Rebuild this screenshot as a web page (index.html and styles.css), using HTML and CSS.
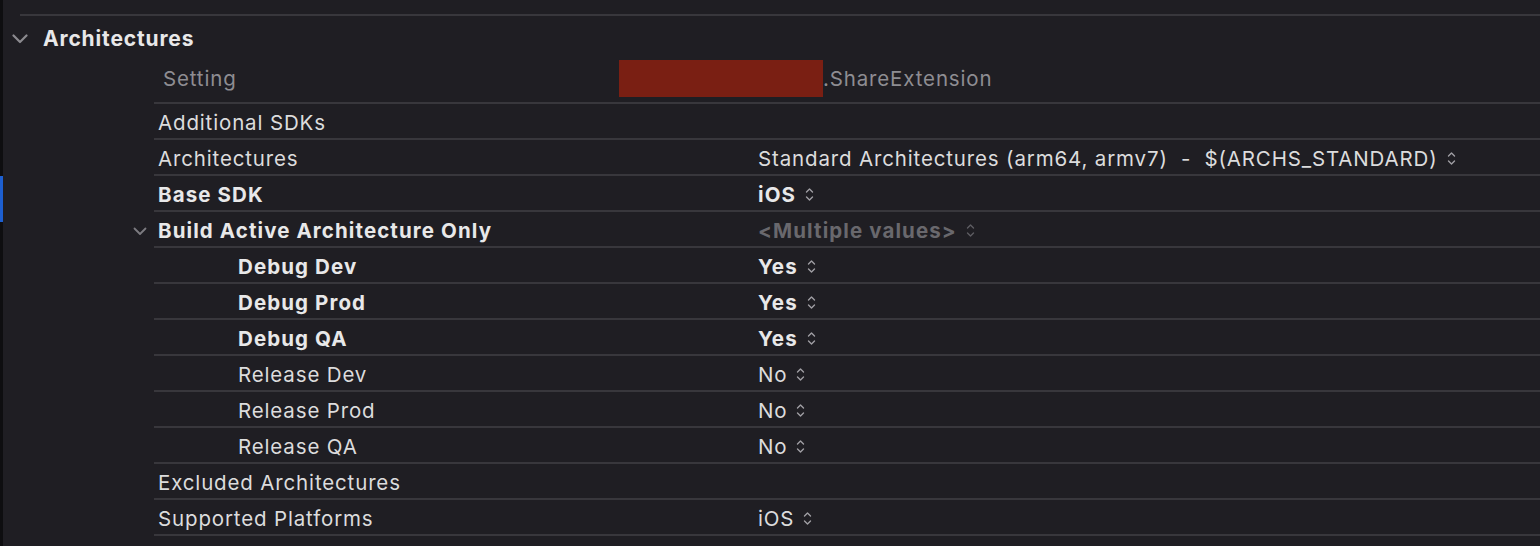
FILE: index.html
```html
<!DOCTYPE html>
<html>
<head>
<meta charset="utf-8">
<link rel="stylesheet" href="styles.css">
</head>
<body>
<div class="window">
  <div class="gutter"><div class="gutter-mark"></div></div>
  <div class="content">
    <div class="top-rule"></div>
    <div class="section-head">
      <svg class="sec-chev" width="16" height="10" viewBox="0 0 16 10"><path d="M1.5 1.5 L8 8 L14.5 1.5" fill="none" stroke="#8b8a8f" stroke-width="2.2" stroke-linecap="round" stroke-linejoin="round"/></svg>
      <span class="sec-title">Architectures</span>
    </div>
    <div class="table">
      <div class="col-head">
        <span class="col-setting">Setting</span>
        <span class="col-target"><span class="redact"></span>.ShareExtension</span>
      </div>

      <div class="row"><span class="label">Additional SDKs</span><span class="value"></span></div>
      <div class="row"><span class="label">Architectures</span><span class="value">Standard Architectures (arm64, armv7)&nbsp;&nbsp;-&nbsp;&nbsp;$(ARCHS_STANDARD)<svg class="updown" viewBox="0 0 9 15"><path d="M1.5 5 L4.5 2 L7.5 5 M1.5 10 L4.5 13 L7.5 10" fill="none" stroke="currentColor" stroke-width="1.4" stroke-linecap="round" stroke-linejoin="round"/></svg></span></div>
      <div class="row bold"><span class="label">Base SDK</span><span class="value">iOS<svg class="updown" viewBox="0 0 9 15"><path d="M1.5 5 L4.5 2 L7.5 5 M1.5 10 L4.5 13 L7.5 10" fill="none" stroke="currentColor" stroke-width="1.4" stroke-linecap="round" stroke-linejoin="round"/></svg></span></div>
      <div class="row bold"><span class="label"><svg class="row-chev" width="14" height="9" viewBox="0 0 14 9"><path d="M1.5 1.5 L7 7 L12.5 1.5" fill="none" stroke="#7c7b80" stroke-width="1.8" stroke-linecap="round" stroke-linejoin="round"/></svg>Build Active Architecture Only</span><span class="value muted">&lt;Multiple values&gt;<svg class="updown" viewBox="0 0 9 15"><path d="M1.5 5 L4.5 2 L7.5 5 M1.5 10 L4.5 13 L7.5 10" fill="none" stroke="currentColor" stroke-width="1.4" stroke-linecap="round" stroke-linejoin="round"/></svg></span></div>
      <div class="row bold sub"><span class="label">Debug Dev</span><span class="value">Yes<svg class="updown" viewBox="0 0 9 15"><path d="M1.5 5 L4.5 2 L7.5 5 M1.5 10 L4.5 13 L7.5 10" fill="none" stroke="currentColor" stroke-width="1.4" stroke-linecap="round" stroke-linejoin="round"/></svg></span></div>
      <div class="row bold sub"><span class="label">Debug Prod</span><span class="value">Yes<svg class="updown" viewBox="0 0 9 15"><path d="M1.5 5 L4.5 2 L7.5 5 M1.5 10 L4.5 13 L7.5 10" fill="none" stroke="currentColor" stroke-width="1.4" stroke-linecap="round" stroke-linejoin="round"/></svg></span></div>
      <div class="row bold sub"><span class="label">Debug QA</span><span class="value">Yes<svg class="updown" viewBox="0 0 9 15"><path d="M1.5 5 L4.5 2 L7.5 5 M1.5 10 L4.5 13 L7.5 10" fill="none" stroke="currentColor" stroke-width="1.4" stroke-linecap="round" stroke-linejoin="round"/></svg></span></div>
      <div class="row sub"><span class="label">Release Dev</span><span class="value">No<svg class="updown" viewBox="0 0 9 15"><path d="M1.5 5 L4.5 2 L7.5 5 M1.5 10 L4.5 13 L7.5 10" fill="none" stroke="currentColor" stroke-width="1.4" stroke-linecap="round" stroke-linejoin="round"/></svg></span></div>
      <div class="row sub"><span class="label">Release Prod</span><span class="value">No<svg class="updown" viewBox="0 0 9 15"><path d="M1.5 5 L4.5 2 L7.5 5 M1.5 10 L4.5 13 L7.5 10" fill="none" stroke="currentColor" stroke-width="1.4" stroke-linecap="round" stroke-linejoin="round"/></svg></span></div>
      <div class="row sub"><span class="label">Release QA</span><span class="value">No<svg class="updown" viewBox="0 0 9 15"><path d="M1.5 5 L4.5 2 L7.5 5 M1.5 10 L4.5 13 L7.5 10" fill="none" stroke="currentColor" stroke-width="1.4" stroke-linecap="round" stroke-linejoin="round"/></svg></span></div>
      <div class="row"><span class="label">Excluded Architectures</span><span class="value"></span></div>
      <div class="row"><span class="label">Supported Platforms</span><span class="value">iOS<svg class="updown" viewBox="0 0 9 15"><path d="M1.5 5 L4.5 2 L7.5 5 M1.5 10 L4.5 13 L7.5 10" fill="none" stroke="currentColor" stroke-width="1.4" stroke-linecap="round" stroke-linejoin="round"/></svg></span></div>
    </div>
  </div>
</div>
</body>
</html>
```

FILE: styles.css
```css
* { box-sizing: border-box; }
html, body {
  margin: 0;
  padding: 0;
  background: #1f1e23;
  height: 100%;
  overflow: hidden;
}
body {
  font-family: Inter, "Noto Sans", "Liberation Sans", sans-serif;
  color: #dcdcdd;
  font-size: 20.5px;
  letter-spacing: 0.85px;
}
.window {
  display: flex;
  height: 546px;
}
.gutter {
  width: 3px;
  flex: none;
  background: #0e0e10;
  padding-top: 176px;
}
.gutter-mark {
  height: 46px;
  background: #1d5fd0;
}
.content {
  flex: 1;
  padding-top: 14px;
}
.top-rule {
  margin-left: 17px;
  height: 2px;
  background: #38373c;
}
.section-head {
  height: 44px;
  display: flex;
  align-items: center;
  padding-left: 9px;
}
.sec-chev { flex: none; margin-top: 2px; }
.sec-title {
  margin-left: 15px;
  font-weight: 700;
  font-size: 21px;
  color: #e8e8e9;
}
.table {
  margin-left: 151px;
}
.col-head {
  height: 44px;
  display: flex;
  align-items: center;
  padding-bottom: 5px;
  border-bottom: 2px solid #38373c;
  color: #8e8d92;
}
.col-setting {
  width: 465px;
  padding-left: 9px;
}
.col-target {
  display: flex;
  align-items: center;
}
.redact {
  display: inline-block;
  width: 204px;
  height: 37px;
  background: #7a1f13;
}
.row {
  height: 36px;
  display: flex;
  align-items: center;
  padding-top: 2px;
  border-bottom: 2px solid #38373c;
}
.label {
  position: relative;
  width: 604px;
  padding-left: 4px;
  flex: none;
}
.sub .label { padding-left: 84px; }
.row-chev {
  position: absolute;
  left: -21px;
  top: 9px;
}
.bold { font-weight: 700; color: #e8e8e9; letter-spacing: 1.1px; }
.value {
  display: flex;
  align-items: center;
}
.value.muted { color: #69686d; }
.updown {
  width: 9px;
  height: 15px;
  margin-left: 9px;
  color: #a09fa4;
}
.muted .updown { color: #5e5d62; }
```
